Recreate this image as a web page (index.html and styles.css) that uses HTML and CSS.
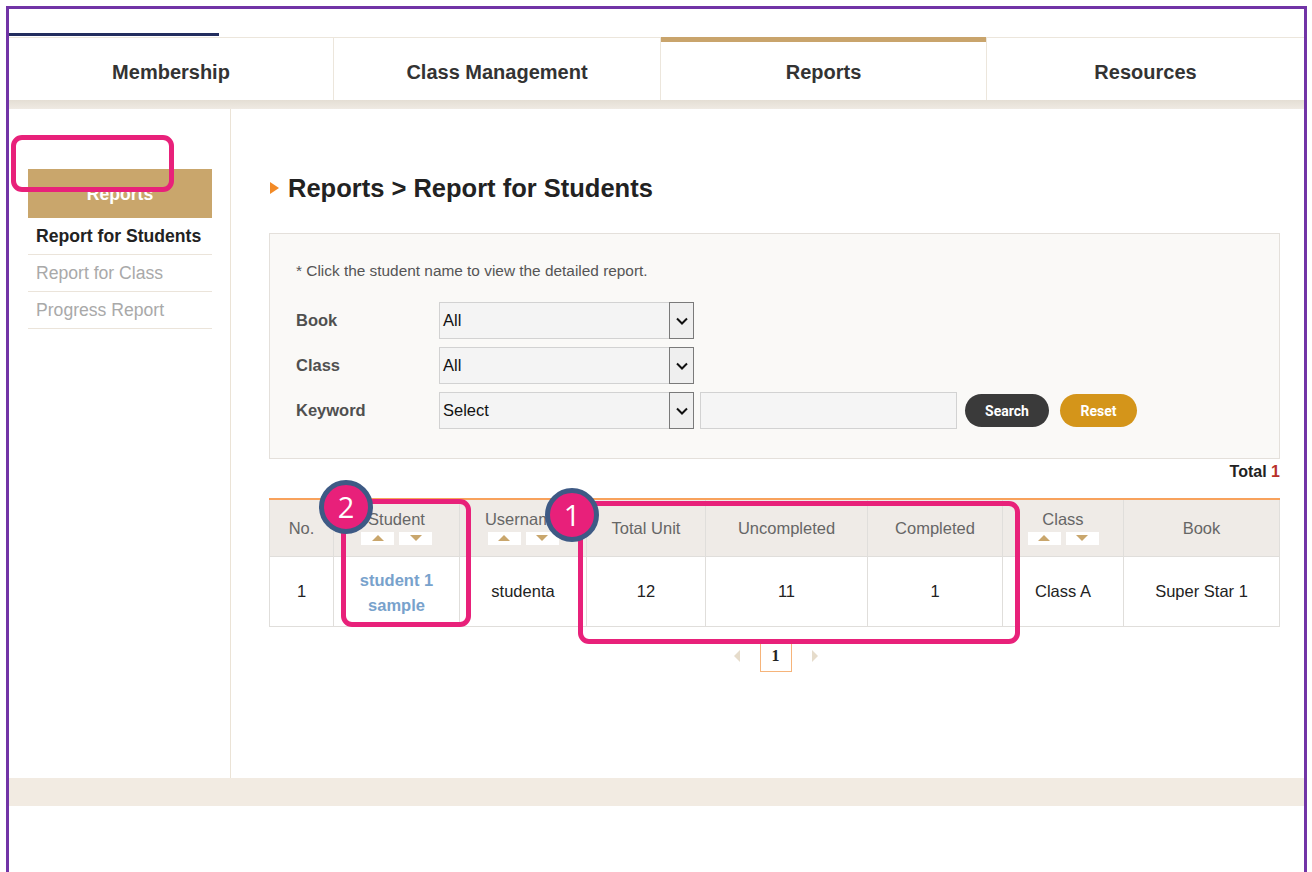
FILE: index.html
```html
<!DOCTYPE html>
<html lang="en">
<head>
<meta charset="utf-8">
<title>Reports - Report for Students</title>
<link rel="stylesheet" href="styles.css">
</head>
<body>
<div class="frame">
  <div class="topbar"><span class="topbar-line"></span></div>

  <nav class="gnb">
    <a class="gnb-item">Membership</a>
    <a class="gnb-item">Class Management</a>
    <a class="gnb-item is-active">Reports</a>
    <a class="gnb-item">Resources</a>
  </nav>
  <div class="gnb-shade"></div>

  <div class="layout">
    <aside class="lnb">
      <h2 class="lnb-title">Reports</h2>
      <ul class="lnb-menu">
        <li class="is-current">Report for Students</li>
        <li>Report for Class</li>
        <li>Progress Report</li>
      </ul>
    </aside>

    <main class="content">
      <h1 class="page-title"><span class="page-title-mark"></span>Reports &gt; Report for Students</h1>

      <section class="search-box">
        <p class="search-note">* Click the student name to view the detailed report.</p>
        <div class="search-row">
          <span class="search-label">Book</span>
          <div class="select"><span class="select-value">All</span><span class="select-btn"><svg width="12" height="8" viewBox="0 0 12 8"><path d="M1 1.5 6 6.5 11 1.5" fill="none" stroke="#111" stroke-width="2"/></svg></span></div>
        </div>
        <div class="search-row">
          <span class="search-label">Class</span>
          <div class="select"><span class="select-value">All</span><span class="select-btn"><svg width="12" height="8" viewBox="0 0 12 8"><path d="M1 1.5 6 6.5 11 1.5" fill="none" stroke="#111" stroke-width="2"/></svg></span></div>
        </div>
        <div class="search-row">
          <span class="search-label">Keyword</span>
          <div class="select"><span class="select-value">Select</span><span class="select-btn"><svg width="12" height="8" viewBox="0 0 12 8"><path d="M1 1.5 6 6.5 11 1.5" fill="none" stroke="#111" stroke-width="2"/></svg></span></div>
          <span class="text-input"></span>
          <button class="btn btn-search">Search</button>
          <button class="btn btn-reset">Reset</button>
        </div>
      </section>

      <p class="total">Total <em>1</em></p>

      <table class="list">
        <colgroup>
          <col class="c-no"><col class="c-student"><col class="c-user"><col class="c-unit">
          <col class="c-uncomp"><col class="c-comp"><col class="c-class"><col class="c-book">
        </colgroup>
        <thead>
          <tr>
            <th>No.</th>
            <th><div class="th-sort">Student<span class="sort"><i class="up"></i><i class="down"></i></span></div></th>
            <th><div class="th-sort">Username<span class="sort"><i class="up"></i><i class="down"></i></span></div></th>
            <th>Total Unit</th>
            <th>Uncompleted</th>
            <th>Completed</th>
            <th><div class="th-sort">Class<span class="sort"><i class="up"></i><i class="down"></i></span></div></th>
            <th>Book</th>
          </tr>
        </thead>
        <tbody>
          <tr>
            <td>1</td>
            <td><a class="student-link">student 1<br>sample</a></td>
            <td>studenta</td>
            <td>12</td>
            <td>11</td>
            <td>1</td>
            <td>Class A</td>
            <td>Super Star 1</td>
          </tr>
        </tbody>
      </table>

      <div class="paging">
        <span class="paging-prev"></span>
        <span class="paging-num">1</span>
        <span class="paging-next"></span>
      </div>
    </main>
  </div>

  <footer class="footer"></footer>
</div>

<!-- callouts drawn over the page -->
<div class="callout callout-lnb"></div>
<div class="callout callout-student"></div>
<div class="callout callout-units"></div>
<span class="badge badge-student">2</span>
<span class="badge badge-units">1</span>
</body>
</html>
```

FILE: styles.css
```css
* {
  box-sizing: border-box;
  margin: 0;
  padding: 0;
}

html,
body {
  background: #fff;
}

body {
  position: relative;
  width: 1312px;
  height: 872px;
  overflow: hidden;
  font-family: "Liberation Sans", Arial, sans-serif;
  color: #333;
}

ul {
  list-style: none;
}

a {
  text-decoration: none;
}

/* outer frame */
.frame {
  margin: 6px 0 0 6px;
  width: 1301px;
  height: 866px;
  border: 3px solid #7134a6;
  border-bottom: 0;
}

.topbar {
  height: 28px;
  padding-top: 24px;
}

.topbar-line {
  display: block;
  width: 210px;
  height: 3px;
  background: #222d5e;
}

/* main navigation */
.gnb {
  display: grid;
  grid-template-columns: 324px 327px 326px 1fr;
  height: 63px;
  border-top: 1px solid #ece6dc;
}

.gnb-item {
  display: flex;
  align-items: center;
  justify-content: center;
  padding-top: 7px;
  border-left: 1px solid #ece6dc;
  font-size: 20px;
  font-weight: bold;
  color: #333;
  position: relative;
}

.gnb-item:first-child {
  border-left: 0;
}

.gnb-item.is-active::before {
  content: "";
  position: absolute;
  left: 0;
  right: 0;
  top: -1px;
  height: 5px;
  background: #c9a46c;
}

.gnb-shade {
  height: 9px;
  background: linear-gradient(#e4ded4, #efeae3);
}

/* page body */
.layout {
  display: flex;
  height: 669px;
}

.lnb {
  width: 222px;
  flex: none;
  border-right: 1px solid #ebe3d6;
  padding: 60px 18px 0 19px;
}

.lnb-title {
  height: 49px;
  display: flex;
  align-items: center;
  justify-content: center;
  padding-top: 2px;
  background: #c9a66c;
  color: #fff;
  font-size: 17.6px;
  font-weight: bold;
}

.lnb-menu li {
  height: 37px;
  display: flex;
  align-items: center;
  padding-left: 8px;
  padding-top: 1px;
  border-bottom: 1px solid #ebe4da;
  font-size: 17.6px;
  color: #a9a9a9;
}

.lnb-menu li.is-current {
  color: #222;
  font-weight: bold;
}

.content {
  flex: 1;
  padding: 64px 25px 0 38px;
}

.page-title {
  display: flex;
  align-items: center;
  height: 30px;
  font-size: 25.5px;
  font-weight: bold;
  color: #222;
  margin-left: 1px;
}

.page-title-mark {
  width: 0;
  height: 0;
  border-left: 9px solid #f28a26;
  border-top: 6px solid transparent;
  border-bottom: 6px solid transparent;
  margin-right: 9px;
}

/* search filter */
.search-box {
  margin-top: 30px;
  height: 226px;
  background: #faf9f7;
  border: 1px solid #e4e0db;
  padding: 28px 0 0 26px;
}

.search-note {
  font-size: 15.4px;
  line-height: 18px;
  color: #555;
  margin-bottom: 22px;
}

.search-row {
  display: flex;
  align-items: center;
  height: 37px;
  margin-bottom: 8px;
}

.search-label {
  width: 143px;
  font-size: 16.5px;
  font-weight: bold;
  color: #505050;
}

.select {
  display: flex;
  width: 255px;
  height: 37px;
  background: #f4f4f4;
  border: 1px solid #d2d2d2;
}

.select-value {
  flex: 1;
  display: flex;
  align-items: center;
  padding-left: 3px;
  font-size: 16.5px;
  color: #111;
}

.select-btn {
  width: 25px;
  display: flex;
  align-items: center;
  justify-content: center;
  background: #efefef;
  border: 1px solid #7a7a7a;
  margin: -1px -1px -1px 0;
}

.text-input {
  width: 257px;
  height: 37px;
  margin-left: 6px;
  background: #f5f5f5;
  border: 1px solid #d2d2d2;
}

.btn {
  height: 33px;
  border: 0;
  border-radius: 17px;
  font-family: Roboto, "Liberation Sans", sans-serif;
  font-size: 14px;
  font-weight: bold;
  color: #fff;
}

.btn-search {
  width: 84px;
  margin-left: 8px;
  background: #3a3a3a;
}

.btn-reset {
  width: 77px;
  margin-left: 11px;
  background: #d4951a;
}

.total {
  text-align: right;
  font-size: 16px;
  font-weight: bold;
  color: #222;
  line-height: 20px;
  margin-top: 3px;
}

.total em {
  font-style: normal;
  color: #b8302a;
}

/* result table */
.list {
  margin-top: 16px;
  width: 1010px;
  table-layout: fixed;
  border-collapse: collapse;
  border-top: 2px solid #f8a25c;
}

.c-no { width: 64px; }
.c-student { width: 126px; }
.c-user { width: 127px; }
.c-unit { width: 119px; }
.c-uncomp { width: 162px; }
.c-comp { width: 135px; }
.c-class { width: 121px; }
.c-book { width: 156px; }

.list th,
.list td {
  border: 1px solid #e0dedb;
  text-align: center;
  font-size: 16.5px;
  font-weight: normal;
}

.list th {
  height: 57px;
  padding-top: 1px;
  background: #efebe7;
  color: #666;
  border-top: 0;
}

.list td {
  height: 70px;
  color: #222;
}

.th-sort {
  display: flex;
  flex-direction: column;
  align-items: center;
  line-height: 19px;
  margin-top: -2px;
}

.sort {
  display: flex;
  gap: 5px;
  margin-top: 3px;
}

.sort i {
  width: 33px;
  height: 13px;
  background: #fff;
  display: flex;
  align-items: center;
  justify-content: center;
}

.sort i::after {
  content: "";
  width: 0;
  height: 0;
  border-left: 6px solid transparent;
  border-right: 6px solid transparent;
}

.sort .up::after {
  border-bottom: 6px solid #c9a66c;
}

.sort .down::after {
  border-top: 6px solid #c9a66c;
}

.student-link {
  display: inline-block;
  font-weight: bold;
  color: #78a2cc;
  line-height: 25px;
  margin-top: 4px;
}

/* pagination */
.paging {
  display: flex;
  align-items: center;
  justify-content: center;
  gap: 20px;
  width: 1010px;
  margin-top: 14px;
  padding-left: 3px;
}

.paging-prev,
.paging-next {
  width: 0;
  height: 0;
  border-top: 6px solid transparent;
  border-bottom: 6px solid transparent;
}

.paging-prev {
  border-right: 6px solid #e6dccb;
}

.paging-next {
  border-left: 6px solid #e6dccb;
}

.paging-num {
  width: 32px;
  height: 31px;
  display: flex;
  align-items: center;
  justify-content: center;
  border: 1px solid #f6b47a;
  font-family: "Liberation Serif", serif;
  font-size: 16px;
  font-weight: bold;
  color: #222;
}

.footer {
  height: 28px;
  background: #f2ebe2;
}

/* callouts */
.callout {
  position: absolute;
  border: 5px solid #e8217a;
  border-radius: 11px;
}

.callout-lnb {
  left: 11px;
  top: 135px;
  width: 163px;
  height: 57px;
}

.callout-student {
  left: 341px;
  top: 499px;
  width: 130px;
  height: 128px;
}

.callout-units {
  left: 578px;
  top: 501px;
  width: 442px;
  height: 143px;
}

.badge {
  position: absolute;
  width: 54px;
  height: 54px;
  border-radius: 50%;
  background: #e8207a;
  border: 5px solid #3e5a85;
  color: #fff;
  font-family: "Open Sans", "Noto Sans", sans-serif;
  font-size: 29px;
  line-height: 44px;
  text-align: center;
}

.badge-student {
  left: 319px;
  top: 480px;
}

.badge-units {
  left: 545px;
  top: 488px;
}
```
